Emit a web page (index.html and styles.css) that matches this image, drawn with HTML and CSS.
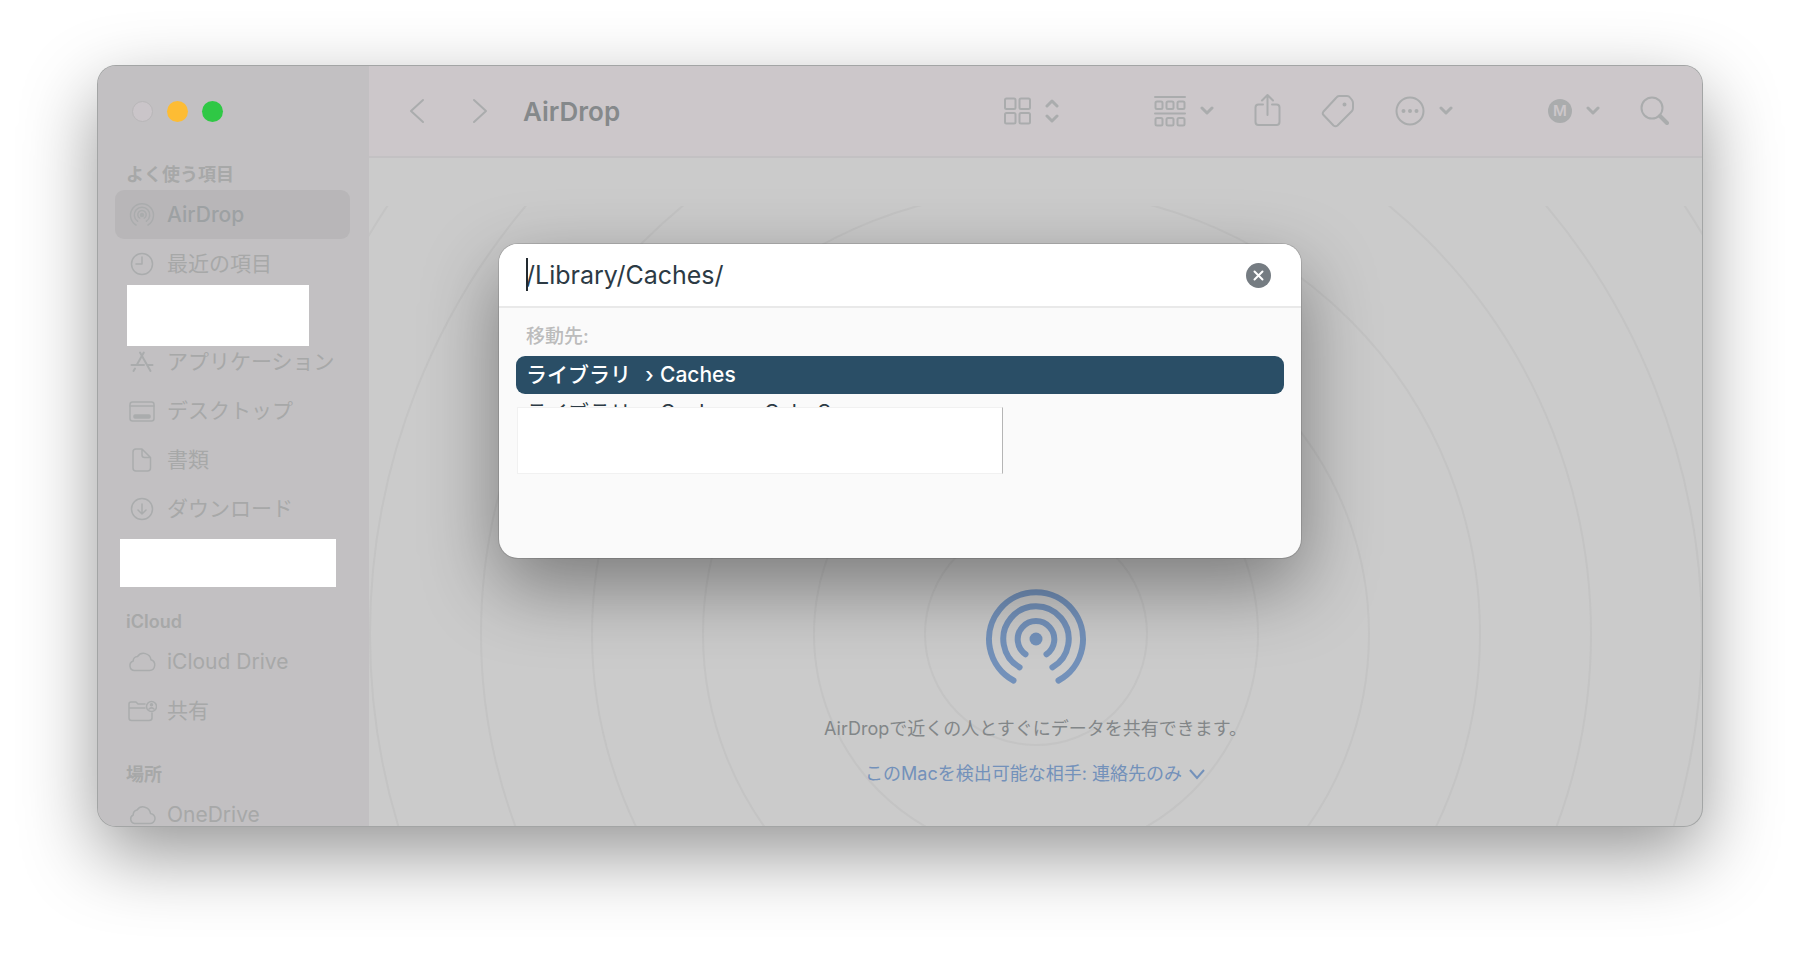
FILE: index.html
```html
<!DOCTYPE html>
<html lang="ja">
  <head>
    <meta charset="UTF-8" />
    <meta name="viewport" content="width=device-width, initial-scale=1.0" />
    <link rel="stylesheet" href="styles.css">
    <title>AirDrop</title>
  </head>
  <body class="desktop">
    <main class="window">
      <aside class="sidebar">
        <div class="lights">
          <button type="button" class="lights__btn lights__btn--close" aria-label="閉じる"></button>
          <button type="button" class="lights__btn lights__btn--min" aria-label="しまう"></button>
          <button type="button" class="lights__btn lights__btn--full" aria-label="フルスクリーン"></button>
        </div>
        <nav class="sidebar__nav">
          <h2 class="sidebar__title">よく使う項目</h2>
          <ul class="sidebar__list">
            <li>
              <a href="#" class="sidebar__item sidebar__item--active">
                <svg class="icon" width="26" height="26" viewBox="0 0 26 26">
                  <path d="M7 23A11.500 11.500 0 1 1 19 23M8.600 19.200A7.700 7.700 0 1 1 17.400 19.200M10.800 16.200A4.200 4.200 0 1 1 15.200 16.200" />
                  <circle class="icon__fill" cx="13" cy="13" r="1.500" />
                </svg>
                AirDrop
              </a>
            </li>
            <li>
              <a href="#" class="sidebar__item">
                <svg class="icon" width="26" height="26" viewBox="0 0 26 26">
                  <circle cx="13" cy="13" r="10.500" />
                  <path d="M13 6V13H7" />
                </svg>
                最近の項目
              </a>
            </li>
            <li class="sidebar__slot"><div class="cover cover--small"></div></li>
            <li>
              <a href="#" class="sidebar__item">
                <svg class="icon icon--bold" width="26" height="26" viewBox="0 0 26 26">
                  <path d="M14.800 3.500L8 15.500M11 3.500L21.500 22M2.500 16H15M19 16H23.500M6 19.500L4.500 22" />
                </svg>
                アプリケーション
              </a>
            </li>
            <li>
              <a href="#" class="sidebar__item">
                <svg class="icon" width="26" height="26" viewBox="0 0 26 26">
                  <rect x="1" y="4" width="24" height="19" rx="2.500" />
                  <path d="M1 8H25" />
                  <rect class="icon__fill" x="5" y="17" width="16" height="3" rx="1" />
                </svg>
                デスクトップ
              </a>
            </li>
            <li>
              <a href="#" class="sidebar__item">
                <svg class="icon" width="26" height="26" viewBox="0 0 26 26">
                  <path d="M13 2H7Q4 2 4 5V21Q4 24 7 24H18.500Q21.500 24 21.500 21V10.500ZM13 2V8Q13 10.500 15.500 10.500H21.500" />
                </svg>
                書類
              </a>
            </li>
            <li>
              <a href="#" class="sidebar__item">
                <svg class="icon" width="26" height="26" viewBox="0 0 26 26">
                  <circle cx="13" cy="13" r="10.500" />
                  <path d="M13 8V18M9 14L13 18L17 14" />
                </svg>
                ダウンロード
              </a>
            </li>
            <li class="sidebar__slot"><div class="cover cover--wide"></div></li>
          </ul>
          <h2 class="sidebar__title">iCloud</h2>
          <ul class="sidebar__list">
            <li>
              <a href="#" class="sidebar__item">
                <svg class="icon" width="28" height="26" viewBox="0 0 28 26">
                  <path d="M6.500 21.500H21.500A5.500 5.500 0 0 0 23 10.800A7.500 7.500 0 0 0 9.500 7.500A4.500 4.500 0 0 0 5.200 12A4.900 4.900 0 0 0 6.500 21.500Z" />
                </svg>
                iCloud Drive
              </a>
            </li>
            <li>
              <a href="#" class="sidebar__item">
                <svg class="icon" width="30" height="26" viewBox="0 0 30 26">
                  <path d="M18 6H11L9 4H4Q2 4 2 6V20Q2 22.500 4.500 22.500H22Q25 22.500 25 20V15M2 10H18" />
                  <circle cx="24.500" cy="8.500" r="5" />
                  <circle class="icon__fill" cx="24.500" cy="6.800" r="1" />
                  <path d="M22 11Q24.500 8.800 27 11" />
                </svg>
                共有
              </a>
            </li>
          </ul>
          <h2 class="sidebar__title">場所</h2>
          <ul class="sidebar__list">
            <li>
              <a href="#" class="sidebar__item">
                <svg class="icon" width="28" height="26" viewBox="0 0 28 26">
                  <path d="M6.500 21.500H21.500A5 5 0 0 0 22.500 11.500A7.500 7.500 0 0 0 9 8A5 5 0 0 0 5.200 13A4.500 4.500 0 0 0 6.500 21.500Z" />
                </svg>
                OneDrive
              </a>
            </li>
          </ul>
        </nav>
      </aside>

      <section class="content">
        <header class="toolbar">
          <button type="button" class="toolbar__btn" aria-label="戻る">
            <svg class="icon icon--bold" width="16" height="26" viewBox="0 0 16 26"><path d="M14 2L2 13L14 24" /></svg>
          </button>
          <button type="button" class="toolbar__btn toolbar__btn--next" aria-label="進む">
            <svg class="icon icon--bold" width="16" height="26" viewBox="0 0 16 26"><path d="M2 2L14 13L2 24" /></svg>
          </button>
          <h1 class="toolbar__title">AirDrop</h1>
          <div class="toolbar__tools">
            <button type="button" class="toolbar__btn" aria-label="表示">
              <svg class="icon icon--bold" width="27" height="28" viewBox="0 0 27 28">
                <rect x="1" y="1.500" width="10.500" height="10.500" rx="1.500" />
                <rect x="15.500" y="1.500" width="10.500" height="10.500" rx="1.500" />
                <rect x="1" y="16" width="10.500" height="10.500" rx="1.500" />
                <rect x="15.500" y="16" width="10.500" height="10.500" rx="1.500" />
              </svg>
              <svg class="icon icon--heavy" width="14" height="24" viewBox="0 0 14 24"><path d="M2 7L7 2L12 7M2 17L7 22L12 17" /></svg>
            </button>
            <button type="button" class="toolbar__btn toolbar__btn--apart" aria-label="グループ">
              <svg class="icon icon--bold" width="32" height="32" viewBox="0 0 32 32">
                <path d="M1 2H31M1 18.500H31" />
                <rect x="1.500" y="6.500" width="7" height="7.500" rx="1.500" />
                <rect x="12.500" y="6.500" width="7" height="7.500" rx="1.500" />
                <rect x="23.500" y="6.500" width="7" height="7.500" rx="1.500" />
                <rect x="1.500" y="23" width="7" height="7.500" rx="1.500" />
                <rect x="12.500" y="23" width="7" height="7.500" rx="1.500" />
                <rect x="23.500" y="23" width="7" height="7.500" rx="1.500" />
              </svg>
              <svg class="icon icon--heavy" width="14" height="10" viewBox="0 0 14 10"><path d="M2 2L7 7L12 2" /></svg>
            </button>
            <button type="button" class="toolbar__btn" aria-label="共有">
              <svg class="icon icon--bold" width="27" height="36" viewBox="0 0 27 36">
                <path d="M9 11.500H4.500Q1.500 11.500 1.500 14.500V29Q1.500 32 4.500 32H22.500Q25.500 32 25.500 29V14.500Q25.500 11.500 22.500 11.500H18M13.500 22V2M8 7.500L13.500 2L19 7.500" />
              </svg>
            </button>
            <button type="button" class="toolbar__btn" aria-label="タグ">
              <svg class="icon icon--bold" width="34" height="34" viewBox="0 0 34 34">
                <path d="M18 2H26Q28 2 29 3.500L31 6Q32 7.500 32 9V14Q32 16 31 17L16.500 31.500Q14.500 33 12.500 31.500L2.500 21Q1 19.500 2.500 17.500L15 4Q16.500 2 18 2Z" />
                <circle class="icon__fill" cx="23.500" cy="10.500" r="1" />
              </svg>
            </button>
            <button type="button" class="toolbar__btn" aria-label="その他">
              <svg class="icon icon--bold" width="30" height="30" viewBox="0 0 30 30">
                <circle cx="15" cy="15" r="13.500" />
                <circle class="icon__fill" cx="8.500" cy="15" r="1" />
                <circle class="icon__fill" cx="15" cy="15" r="1" />
                <circle class="icon__fill" cx="21.500" cy="15" r="1" />
              </svg>
              <svg class="icon icon--heavy" width="14" height="10" viewBox="0 0 14 10"><path d="M2 2L7 7L12 2" /></svg>
            </button>
            <button type="button" class="toolbar__btn toolbar__btn--apart" aria-label="アカウント">
              <span class="toolbar__badge">M</span>
              <svg class="icon icon--heavy" width="14" height="10" viewBox="0 0 14 10"><path d="M2 2L7 7L12 2" /></svg>
            </button>
            <button type="button" class="toolbar__btn" aria-label="検索">
              <svg class="icon icon--bold" width="29" height="30" viewBox="0 0 29 30">
                <circle cx="12" cy="12" r="10.500" />
                <path class="icon__handle" d="M20 20L27 27" />
              </svg>
            </button>
          </div>
        </header>

        <div class="airdrop">
          <div class="airdrop__rings">
            <svg class="airdrop__rings-svg" width="1600" height="1600" viewBox="0 0 1600 1600">
              <circle cx="800" cy="800" r="111" />
              <circle cx="800" cy="800" r="222" />
              <circle cx="800" cy="800" r="333" />
              <circle cx="800" cy="800" r="444" />
              <circle cx="800" cy="800" r="555" />
              <circle cx="800" cy="800" r="666" />
              <circle cx="800" cy="800" r="777" />
            </svg>
          </div>
          <svg class="airdrop__logo" width="102" height="102" viewBox="0 0 102 102">
            <path d="M28.500 92.500A47 47 0 1 1 73.500 92.500M34.600 79.300A32.700 32.700 0 1 1 67.400 79.300M40.500 66.300A18.300 18.300 0 1 1 61.500 66.300" />
            <circle cx="51" cy="51" r="6.500" />
          </svg>
          <p class="airdrop__text">AirDropで近くの人とすぐにデータを共有できます。</p>
          <button type="button" class="airdrop__link">
            このMacを検出可能な相手: 連絡先のみ
            <svg width="18" height="12" viewBox="0 0 18 12"><path d="M2 2L9 10L16 2" /></svg>
          </button>
        </div>
      </section>

      <div class="sheet" role="dialog" aria-label="フォルダへ移動">
        <div class="sheet__field">
          <span class="sheet__caret"></span>
          <input type="text" class="sheet__input" aria-label="移動先のパス" value="/Library/Caches/" />
          <button type="button" class="sheet__clear" aria-label="消去">
            <svg width="25" height="25" viewBox="0 0 25 25">
              <circle cx="12.500" cy="12.500" r="12.500" />
              <path d="M8.500 8.500L16.500 16.500M16.500 8.500L8.500 16.500" />
            </svg>
          </button>
        </div>
        <h2 class="sheet__label">移動先:</h2>
        <ul class="sheet__results">
          <li>
            <button type="button" class="sheet__result sheet__result--active">
              <span>ライブラリ</span><span class="sheet__sep">›</span><span>Caches</span>
            </button>
          </li>
          <li>
            <button type="button" class="sheet__result">
              <span>ライブラリ</span><span class="sheet__sep">›</span><span>Caches</span><span class="sheet__sep">›</span><span>ColorSync</span>
            </button>
          </li>
        </ul>
        <div class="cover cover--sheet"></div>
      </div>
    </main>
  </body>
</html>
```
FILE: styles.css
```css
* {
  box-sizing: border-box;
}
.desktop {
  margin: 0;
  height: 100vh;
  padding: 66px 98px 130px;
  background: #fff;
  font-family: Inter, "Noto Sans CJK JP", sans-serif;
}
button {
  padding: 0;
  border: none;
  background: none;
  font: inherit;
  color: inherit;
}
ul {
  margin: 0;
  padding: 0;
  list-style: none;
}
.window {
  position: relative;
  display: flex;
  height: 100%;
  border-radius: 18px;
  background: #cbcbcb;
  box-shadow: 0 0 0 1px #a3a5a5, 0 28px 76px rgba(0, 0, 0, 0.42);
}

.icon {
  flex-shrink: 0;
  fill: none;
  stroke: #aaacad;
  stroke-width: 1.5;
  stroke-linecap: round;
  stroke-linejoin: round;
}
.icon--bold {
  stroke-width: 2;
}
.icon--heavy {
  stroke-width: 3;
}
.icon__fill {
  fill: #aaacad;
}
.icon__handle {
  stroke-width: 4;
}

.sidebar {
  width: 271px;
  flex-shrink: 0;
  padding: 35px 19px 0 17px;
  overflow: hidden;
  border-radius: 18px 0 0 18px;
  background: #c2c0c2;
  color: #a7a8a8;
}
.lights {
  display: flex;
  gap: 14px;
  padding-left: 17px;
}
.lights__btn {
  width: 21px;
  height: 21px;
  border-radius: 50%;
}
.lights__btn--close {
  background: #cac5c9;
  border: 1px solid #b8b6b8;
}
.lights__btn--min {
  background: #fdbc34;
}
.lights__btn--full {
  background: #2fc845;
}
.sidebar__nav {
  padding-top: 40px;
}
.sidebar__title {
  margin: 0;
  padding: 1px 0 3px 11px;
  font-size: 18px;
  font-weight: 600;
  line-height: 24px;
}
.sidebar__list {
  margin-bottom: 27px;
}
.sidebar__item {
  display: flex;
  align-items: center;
  height: 49px;
  padding-left: 52px;
  border-radius: 9px;
  color: inherit;
  font-size: 21px;
  line-height: 24px;
  text-decoration: none;
}
.sidebar__item .icon {
  width: 30px;
  margin-left: -40px;
  margin-right: 10px;
}
.sidebar__item--active {
  background: #b8b6b8;
  color: #9da1a3;
  font-weight: 500;
}
.sidebar__slot {
  height: 49px;
}
.cover {
  position: absolute;
  background: #fff;
}
.cover--small {
  width: 182px;
  height: 61px;
  margin: -3px 0 0 12px;
}
.cover--wide {
  width: 216px;
  height: 48px;
  margin: 6px 0 0 5px;
}

.content {
  flex: 1;
  display: flex;
  flex-direction: column;
  min-width: 0;
}
.toolbar {
  display: flex;
  align-items: center;
  height: 92px;
  padding: 0 33px 0 40px;
  border-bottom: 2px solid #c3c1c3;
  border-radius: 0 18px 0 0;
  background: #ccc7ca;
}
.toolbar__btn {
  display: flex;
  align-items: center;
  gap: 14px;
}
.toolbar__btn--next {
  margin-left: 47px;
}
.toolbar__btn--apart {
  margin-left: 55px;
}
.toolbar__title {
  margin: 0 auto 0 35px;
  color: #85898b;
  font-size: 26px;
  font-weight: 600;
}
.toolbar__tools {
  display: flex;
  align-items: center;
  gap: 40px;
}
.toolbar__badge {
  width: 24px;
  height: 24px;
  border-radius: 50%;
  background: #aaacad;
  color: #ccc7ca;
  font-size: 15px;
  font-weight: 600;
  line-height: 24px;
  text-align: center;
}

.airdrop {
  position: relative;
  flex: 1;
  display: flex;
  flex-direction: column;
  align-items: center;
  justify-content: flex-end;
  padding-bottom: 40px;
}
.airdrop__rings {
  position: absolute;
  inset: 48px 0 0;
  overflow: hidden;
  border-radius: 0 0 18px 0;
}
.airdrop__rings-svg {
  position: absolute;
  left: 50%;
  bottom: -608px;
  transform: translateX(-50%);
  fill: none;
  stroke: #c4c4c4;
  stroke-width: 2;
}
.airdrop__logo {
  position: relative;
  fill: none;
  stroke: #7391ba;
  stroke-width: 6;
  stroke-linecap: round;
}
.airdrop__logo circle {
  fill: #7391ba;
  stroke: none;
}
.airdrop__text {
  position: relative;
  margin: 27px 0 21px;
  color: #828688;
  font-size: 18px;
  line-height: 24px;
}
.airdrop__link {
  position: relative;
  display: flex;
  align-items: center;
  gap: 6px;
  color: #7391ba;
  font-size: 18px;
  line-height: 24px;
}
.airdrop__link svg {
  fill: none;
  stroke: #7391ba;
  stroke-width: 2;
}

.sheet {
  position: absolute;
  top: 178px;
  left: 25%;
  width: 50%;
  height: 314px;
  border-radius: 19px;
  background: #fafafa;
  color: #2c3a44;
  box-shadow: 0 0 0 1px rgba(0, 0, 0, 0.12), 0 28px 76px rgba(0, 0, 0, 0.4);
}
.sheet__field {
  position: relative;
  display: flex;
  align-items: center;
  height: 64px;
  padding: 0 30px 0 27px;
  border-bottom: 2px solid #e9e9e9;
  border-radius: 19px 19px 0 0;
  background: #fff;
}
.sheet__caret {
  position: absolute;
  top: 14px;
  left: 27px;
  width: 2px;
  height: 33px;
  background: #222a30;
}
.sheet__input {
  flex: 1;
  padding: 0;
  border: none;
  outline: none;
  background: none;
  color: inherit;
  font: inherit;
  font-size: 25px;
}
.sheet__clear {
  display: flex;
}
.sheet__clear svg {
  fill: #757c82;
  stroke-width: 2;
  stroke-linecap: round;
}
.sheet__clear path {
  stroke: #fff;
}
.sheet__label {
  margin: 18px 0 8px 27px;
  color: #bcbcbc;
  font-size: 19px;
  font-weight: 500;
  line-height: 22px;
}
.sheet__results {
  padding: 0 17px;
}
.sheet__result {
  display: flex;
  align-items: center;
  width: 100%;
  height: 38px;
  padding-left: 10px;
  border-radius: 9px;
  font-size: 21px;
  line-height: 24px;
}
.sheet__result--active {
  background: #2a4e66;
  color: #fff;
  font-weight: 500;
}
.sheet__sep {
  width: 29px;
  padding-left: 8px;
  text-align: center;
}
.cover--sheet {
  top: 163px;
  left: 18px;
  width: 486px;
  height: 67px;
  border: 1px solid #f1f1f1;
  border-right-color: #b5b5b5;
}
```
